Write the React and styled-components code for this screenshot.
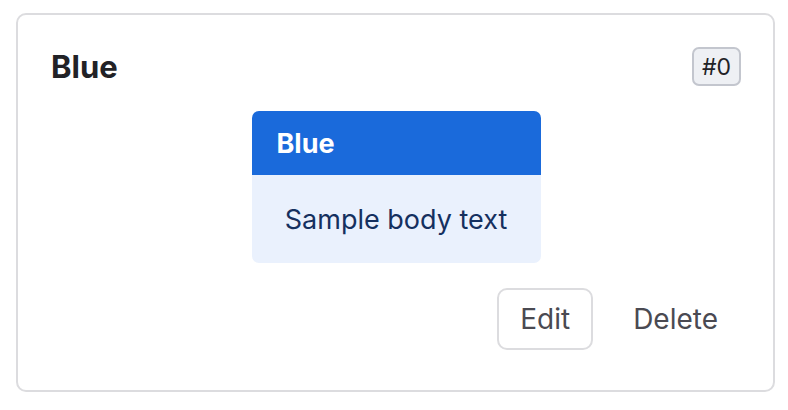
import React from "react";
import styled, { createGlobalStyle } from "styled-components";

const GlobalStyle = createGlobalStyle`
  body {
    margin: 0;
    background: #ffffff;
    font-family: Inter, "Liberation Sans", sans-serif;
  }
`;

const Page = styled.div`
  padding: 13px 14px 18px 16px;
`;

const Card = styled.section`
  box-sizing: border-box;
  width: 759px;
  height: 379px;
  border: 2px solid #dcdcdf;
  border-radius: 10px;
  padding: 32px 32px 40px 33px;
  display: flex;
  flex-direction: column;
`;

const Header = styled.div`
  display: flex;
  align-items: center;
  justify-content: space-between;
`;

const Title = styled.h2`
  margin: 0;
  font-size: 31px;
  font-weight: 700;
  color: #222226;
`;

const Badge = styled.span`
  box-sizing: border-box;
  height: 39px;
  padding: 0 8px;
  display: inline-flex;
  align-items: center;
  border: 2px solid #c3c6ce;
  border-radius: 7px;
  background: #eef0f4;
  color: #222226;
  font-size: 23px;
`;

const Panel = styled.div`
  align-self: center;
  width: 289px;
  margin-top: 25px;
  border-radius: 7px;
  overflow: hidden;
  background: ${(p) => p.$tint};
`;

const PanelHead = styled.div`
  height: 64px;
  display: flex;
  align-items: center;
  padding: 0 25px;
  background: ${(p) => p.$color};
  color: #ffffff;
  font-size: 27px;
  font-weight: 700;
`;

const PanelBody = styled.div`
  height: 88px;
  display: flex;
  align-items: center;
  justify-content: center;
  color: #15305f;
  font-size: 27px;
`;

const Actions = styled.div`
  margin-top: auto;
  display: flex;
  justify-content: flex-end;
  gap: 17px;
`;

const Button = styled.button`
  box-sizing: border-box;
  height: 62px;
  padding: 0 21px;
  border: 2px solid ${(p) => (p.$outline ? "#dcdcdf" : "transparent")};
  border-radius: 10px;
  background: transparent;
  color: #4a4a52;
  font-family: inherit;
  font-size: 28px;
  cursor: pointer;
`;

export default function App() {
  return (
    <>
      <GlobalStyle />
      <Page>
        <Card>
          <Header>
            <Title>Blue</Title>
            <Badge>#0</Badge>
          </Header>
          <Panel $tint="#eaf1fd">
            <PanelHead $color="#1a6adb">Blue</PanelHead>
            <PanelBody>Sample body text</PanelBody>
          </Panel>
          <Actions>
            <Button $outline>Edit</Button>
            <Button>Delete</Button>
          </Actions>
        </Card>
      </Page>
    </>
  );
}
